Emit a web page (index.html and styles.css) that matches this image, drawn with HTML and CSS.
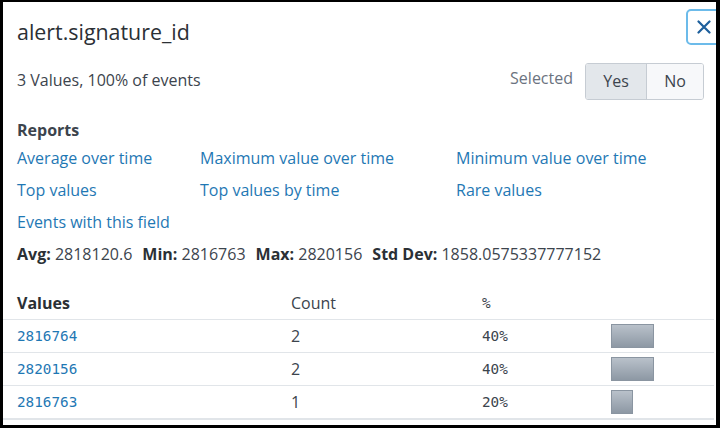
FILE: index.html
```html
<!DOCTYPE html>
<html>
<head>
<meta charset="utf-8">
<link rel="stylesheet" href="styles.css">
</head>
<body>
<div class="frame">
  <div class="head">
    <h1 class="title">alert.signature_id</h1>
    <button class="close" aria-label="Close">
      <svg width="14" height="14" viewBox="0 0 14 14"><path d="M1.5 1.5 L12.5 12.5 M12.5 1.5 L1.5 12.5" stroke="#1d5f9c" stroke-width="2.2" stroke-linecap="round" fill="none"/></svg>
    </button>
  </div>
  <div class="sub">
    <span class="summary">3 Values, 100% of events</span>
    <div class="selected">
      <span class="sel-label">Selected</span>
      <div class="seg">
        <span class="seg-btn seg-on">Yes</span>
        <span class="seg-btn">No</span>
      </div>
    </div>
  </div>
  <div class="reports-title">Reports</div>
  <div class="links">
    <a class="link">Average over time</a>
    <a class="link">Maximum value over time</a>
    <a class="link">Minimum value over time</a>
    <a class="link">Top values</a>
    <a class="link">Top values by time</a>
    <a class="link">Rare values</a>
    <a class="link">Events with this field</a>
  </div>
  <div class="stats">
    <span class="stat"><b>Avg:</b> 2818120.6</span>
    <span class="stat"><b>Min:</b> 2816763</span>
    <span class="stat"><b>Max:</b> 2820156</span>
    <span class="stat"><b>Std Dev:</b> 1858.0575337777152</span>
  </div>
  <div class="table">
    <div class="row hdr">
      <span class="c-val">Values</span>
      <span class="c-cnt">Count</span>
      <span class="c-pct mono">%</span>
      <span></span>
    </div>
    <div class="row">
      <span class="c-val mono link">2816764</span>
      <span class="c-cnt">2</span>
      <span class="c-pct mono">40%</span>
      <span class="bar-cell"><span class="bar" style="width:43px"></span></span>
    </div>
    <div class="row">
      <span class="c-val mono link">2820156</span>
      <span class="c-cnt">2</span>
      <span class="c-pct mono">40%</span>
      <span class="bar-cell"><span class="bar" style="width:43px"></span></span>
    </div>
    <div class="row last">
      <span class="c-val mono link">2816763</span>
      <span class="c-cnt">1</span>
      <span class="c-pct mono">20%</span>
      <span class="bar-cell"><span class="bar" style="width:22px"></span></span>
    </div>
  </div>
</div>
</body>
</html>
```
FILE: styles.css
```css
* { box-sizing: border-box; }
html, body { margin: 0; padding: 0; background: #fff; }
body {
  font-family: "Open Sans", "Liberation Sans", sans-serif;
  font-size: 16px;
  color: #3c444d;
}
.frame {
  width: 720px;
  height: 428px;
  border-style: solid;
  border-color: #000;
  border-width: 2px 4px 3px 3px;
  overflow: hidden;
  background: #fff;
}
.head {
  display: flex;
  justify-content: space-between;
  align-items: flex-start;
  height: 56px;
  padding-left: 14px;
}
.title {
  margin: 18px 0 0 0;
  font-size: 21.4px;
  font-weight: 400;
  line-height: 24px;
  color: #2b3035;
}
.close {
  margin: 7px -6px 0 0;
  width: 36px;
  height: 36px;
  padding: 0;
  border: 2px solid #6cbbea;
  border-radius: 5px;
  background: #fff;
  display: flex;
  align-items: center;
  justify-content: center;
}
.sub {
  height: 46px;
  display: flex;
  align-items: center;
  justify-content: space-between;
  padding: 0 12px 0 14px;
}
.summary { line-height: 20px; margin-top: -2px; }
.selected { display: flex; align-items: center; gap: 12px; }
.sel-label { color: #6b7380; margin-top: -6px; }
.seg {
  display: flex;
  height: 37px;
  border: 1px solid #c6ccd3;
  border-radius: 3px;
  overflow: hidden;
}
.seg-btn {
  width: 56px;
  display: flex;
  align-items: center;
  justify-content: center;
  background: #f7f8fa;
  color: #3c444d;
  font-size: 16px;
}
.seg-on {
  width: 61px;
  background: #e3e7eb;
  border-right: 1px solid #c6ccd3;
}
.reports-title {
  margin-top: 14px;
  padding-left: 14px;
  line-height: 24px;
  font-weight: 700;
}
.links {
  display: grid;
  grid-template-columns: 183px 256px 1fr;
  grid-auto-rows: 32px;
  align-items: center;
  padding-left: 14px;
}
.link { color: #1f78b4; text-decoration: none; }
.stats {
  height: 32px;
  display: flex;
  align-items: center;
  padding-left: 14px;
}
.stat { margin-right: 10px; }
.stat b { font-weight: 700; color: #2b3035; }
.table { margin-top: 17px; margin-right: 2px; }
.row {
  display: grid;
  grid-template-columns: 274px 191px 129px 1fr;
  height: 33px;
  align-items: center;
  border-bottom: 1px solid #e1e5e9;
  padding-left: 14px;
}
.row.last { border-bottom-width: 2px; height: 34px; }
.hdr .c-val { font-weight: 700; color: #2b3035; }
.mono {
  font-family: "DejaVu Sans Mono", "Liberation Mono", monospace;
  font-size: 14.3px;
}
.c-val.link { color: #1f78b4; }
.bar-cell { display: flex; align-items: center; }
.bar {
  display: block;
  height: 24px;
  background: linear-gradient(#b9c1ca, #8d98a4);
  border: 1px solid #8a95a1;
}
```
